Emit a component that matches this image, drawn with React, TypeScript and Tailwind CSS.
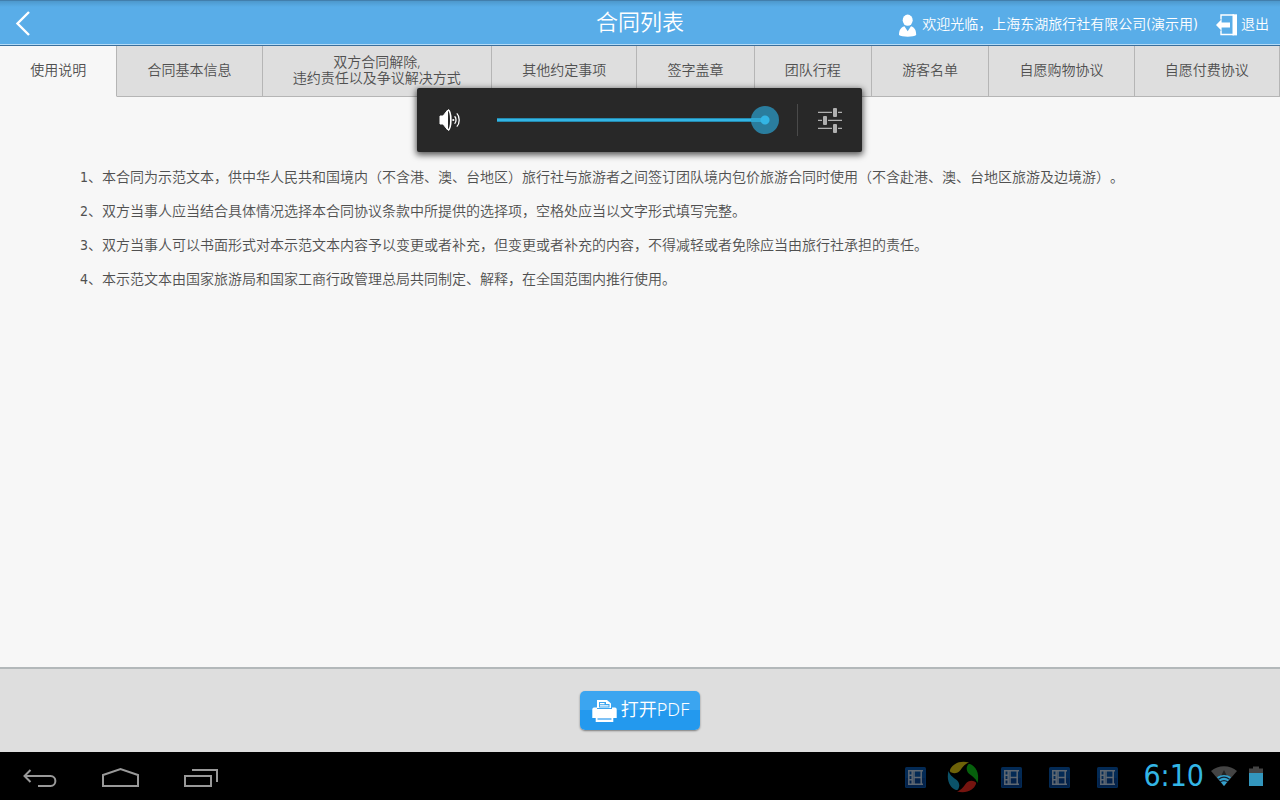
import { useState } from "react";

const tabs = [
  "使用说明",
  "合同基本信息",
  "双方合同解除,\n违约责任以及争议解决方式",
  "其他约定事项",
  "签字盖章",
  "团队行程",
  "游客名单",
  "自愿购物协议",
  "自愿付费协议",
];

const notes = [
  "1、本合同为示范文本，供中华人民共和国境内（不含港、澳、台地区）旅行社与旅游者之间签订团队境内包价旅游合同时使用（不含赴港、澳、台地区旅游及边境游）。",
  "2、双方当事人应当结合具体情况选择本合同协议条款中所提供的选择项，空格处应当以文字形式填写完整。",
  "3、双方当事人可以书面形式对本示范文本内容予以变更或者补充，但变更或者补充的内容，不得减轻或者免除应当由旅行社承担的责任。",
  "4、本示范文本由国家旅游局和国家工商行政管理总局共同制定、解释，在全国范围内推行使用。",
];

function Header() {
  return (
    <header className="grid h-[46px] grid-cols-[1fr_auto_1fr] items-center border-t border-b border-t-[#427fad] border-b-[#3a6f9c] bg-[linear-gradient(to_bottom,#4d98cc_0px,#59ade8_6px,#59ade8_43px,#b5dcf7_43px)] text-white">
      <button aria-label="返回" className="ml-3.5 w-fit">
        <svg width="18" height="28" viewBox="0 0 18 28" fill="none" stroke="currentColor" strokeWidth="2.4">
          <path d="M15 3 3.5 14.5 15 26" />
        </svg>
      </button>
      <h1 className="pb-1 text-[22px] leading-7 font-[350]">合同列表</h1>
      <div className="flex items-center justify-end gap-4.5 pt-0.5 pr-[11px] font-['DejaVu_Sans_Condensed','Noto_Sans_CJK_SC',sans-serif] text-sm">
        <span className="flex items-center gap-1">
          <svg width="20" height="24" viewBox="0 0 20 24" fill="currentColor" className="mt-1">
            <ellipse cx="9.7" cy="6.2" rx="5" ry="5.6" />
            <path d="M1 21C1 16.5 2.4 13.4 6.4 12.2L9.7 17.2L13 12.2C17 13.4 18.2 16.5 18.2 21C16 23.2 3.6 23.2 1 21Z" />
          </svg>
          欢迎光临，上海东湖旅行社有限公司(演示用)
        </span>
        <a href="#logout" className="flex items-center gap-1">
          <svg width="21" height="22" viewBox="0 0 21 22" fill="currentColor" className="mt-0.5">
            <path d="M0 11 5.6 5.2V8.5H14V13.5H5.6V16.8Z" />
            <path d="M5 5.5V1H18M5 16.5V20.5H18" fill="none" stroke="currentColor" strokeWidth="1.4" />
            <path d="M16.5 0.3H21V21.4H16.5Z" />
          </svg>
          退出
        </a>
      </div>
    </header>
  );
}

function VolumePanel() {
  const [volume, setVolume] = useState(100);
  return (
    <div className="pointer-events-none absolute inset-x-0 top-[88px] flex justify-center pr-px">
      <div className="pointer-events-auto flex h-16 w-[445px] items-center rounded-xs bg-[#282828] pl-5 shadow-[0_2px_6px_1px_rgba(0,0,0,0.65)]">
        <svg width="26" height="26" viewBox="0 0 26 26" fill="none" stroke="#fff" className="shrink-0">
          <path d="M3 9H6L10.5 3.2V22.8L6 17H3Z" fill="#fff" strokeLinejoin="round" />
          <path d="M11 2.8C14.8 4.5 14.8 21.5 11 23.2" strokeWidth="1.6" />
          <circle cx="16.3" cy="13" r="1.1" fill="#fff" stroke="none" />
          <path d="M17.6 9.2C19.5 11 19.5 15 17.6 16.8M19.8 6.4C23 9.5 23 16.5 19.8 19.6" strokeWidth="1.3" />
        </svg>
        <input
          type="range"
          aria-label="音量"
          min={0}
          max={100}
          value={volume}
          onChange={(e) => setVolume(Number(e.target.value))}
          className="mr-[18px] ml-5 h-8 min-w-0 flex-1 appearance-none bg-[linear-gradient(#258bb0_0_1px,#33b5e5_1px_3px,#258bb0_3px)] bg-[length:calc(100%-28px)_4px] bg-center bg-no-repeat [&::-webkit-slider-thumb]:size-7 [&::-webkit-slider-thumb]:appearance-none [&::-webkit-slider-thumb]:rounded-full [&::-webkit-slider-thumb]:bg-[radial-gradient(circle,#33b5e5_4px,transparent_5px),linear-gradient(to_right,#2fa5d0_50%,transparent_50%),linear-gradient(#2a7d9e,#2a7d9e)] [&::-webkit-slider-thumb]:bg-[length:100%_100%,100%_4px,100%_100%] [&::-webkit-slider-thumb]:bg-center [&::-webkit-slider-thumb]:bg-no-repeat"
        />
        <span className="h-8 w-px bg-[#4a4a4a]" />
        <button aria-label="音量设置" className="flex w-16 shrink-0 justify-center">
          <svg width="26" height="26" viewBox="0 0 26 26" fill="#b0b0b0">
            <path d="M1 4.7H15V6H1ZM21 4.7H25V6H21ZM1 12.7H5V14H1ZM11 12.7H25V14H11ZM1 20.7H15V22H1ZM21 20.7H25V22H21Z" />
            <rect x="16" y="1" width="4" height="9" rx="1" />
            <rect x="6" y="9" width="4" height="9" rx="1" />
            <rect x="16" y="17" width="4" height="9" rx="1" />
          </svg>
        </button>
      </div>
    </div>
  );
}

function FilmIcon() {
  return (
    <svg width="21" height="21" viewBox="0 0 21 21">
      <rect width="21" height="21" rx="1.5" fill="#032a55" />
      <rect x="1" y="11" width="19" height="9" fill="#04224a" />
      <path
        d="M3.8 3V18M7.2 3V18M3 3.8H18M3 17.2H18M3.8 8.3H7.2M3.8 12.8H7.2M9 10.5H16M9 3.8V17.2M16.2 3.8V17.2"
        fill="none"
        stroke="#5f6872"
        strokeWidth="1.5"
      />
    </svg>
  );
}

function PinwheelIcon() {
  const blade = "M3 9C5 3.5 12-1 22 1.5C18 3 16.5 5 13.5 9C11 12.5 7 13 4.5 11.5C3 10.8 2.7 10 3 9Z";
  return (
    <svg width="33" height="32" viewBox="0 0 33 32">
      <path d={blade} fill="#6e6208" />
      <path d={blade} fill="#06600c" transform="rotate(90 16 16)" />
      <path d={blade} fill="#75140f" transform="rotate(180 16 16)" />
      <path d={blade} fill="#0b5269" transform="rotate(270 16 16)" />
    </svg>
  );
}

function SystemBar() {
  return (
    <nav className="flex h-12 items-center justify-between bg-black pt-0.5 pr-[17px] pl-[21px]">
      <div className="flex items-center gap-11 text-[#999]">
        <button aria-label="后退">
          <svg width="36" height="24" viewBox="0 0 36 24" fill="none" stroke="currentColor" strokeWidth="2">
            <path d="M9.5 5 3.5 11 9.5 17M3.5 11H29.5C36 11 36 21 29.5 21H17" />
          </svg>
        </button>
        <button aria-label="主页">
          <svg width="38" height="24" viewBox="0 0 38 24" fill="none" stroke="currentColor" strokeWidth="2">
            <path d="M2 21V10L19.500 4 37 10V21Z" />
          </svg>
        </button>
        <button aria-label="最近任务">
          <svg width="36" height="24" viewBox="0 0 36 24" fill="none" stroke="currentColor" strokeWidth="2">
            <path d="M2 11H28V21H2ZM9 5H34V17" />
          </svg>
        </button>
      </div>
      <div className="flex items-center">
        <div className="mr-[25px] flex items-center gap-[27px]">
          <FilmIcon />
          <span className="-mx-1.5">
            <PinwheelIcon />
          </span>
          <FilmIcon />
          <FilmIcon />
          <FilmIcon />
        </div>
        <time className="pb-0.5 font-['DejaVu_Sans_Condensed','Noto_Sans',sans-serif] text-3xl leading-8 text-[#33b5e5]">6:10</time>
        <svg width="28" height="24" viewBox="0 0 28 24" className="ml-1.5">
          <path d="M1 6C8-.5 20-.5 27 6L14 21Z" fill="#444" />
          <path d="M14 5 17 11H11Z" fill="#222" />
          <path d="M7 12.2C11 9.300 17 9.300 21 12.2L14 21Z" fill="#33a0cc" />
          <path d="M8.500 14.2C12 11.6 16 11.6 19.500 14.2M10 17C12.8 15 15.2 15 18 17" fill="none" stroke="#123" strokeWidth="1.2" />
        </svg>
        <svg width="14" height="22" viewBox="0 0 14 22" className="ml-[11px]">
          <path d="M0 2.500H4V0.500H10V2.500H14V8H0Z" fill="#444" />
          <path d="M0 7H14V20H0Z" fill="#3396bd" />
        </svg>
      </div>
    </nav>
  );
}

export default function App() {
  const [active, setActive] = useState(0);
  return (
    <div lang="zh-CN" className="relative flex min-h-screen flex-col bg-[#f7f7f7] font-['Noto_Sans','Noto_Sans_CJK_SC',sans-serif] font-[350] text-[#505050] [text-spacing-trim:space-all]">
      <Header />
      <div role="tablist" className="flex h-[51px]">
        {tabs.map((label, i) => (
          <button
            key={label}
            role="tab"
            aria-selected={i === active}
            onClick={() => setActive(i)}
            className={
              i === active
                ? "flex-auto border-r border-b border-r-[#b5b5b5] border-b-[#f7f7f7] px-[30px] pb-0.5 text-sm leading-4 whitespace-pre"
                : "flex-auto border-r border-b border-[#b5b5b5] bg-[#dedede] px-[30px] pb-0.5 text-sm leading-4 whitespace-pre"
            }
          >
            {label}
          </button>
        ))}
      </div>
      <main className="flex-1 px-20 pt-[63px] font-['DejaVu_Sans_Condensed','Noto_Sans_CJK_SC',sans-serif]">
        {notes.map((note) => (
          <p key={note} className="text-sm leading-[34px]">
            {note}
          </p>
        ))}
      </main>
      <footer className="flex h-[85px] justify-center border-t-2 border-[#b3b8ba] bg-[#dedede] pt-[22px]">
        <button className="flex h-[39px] items-center gap-1 rounded-[5px] bg-[linear-gradient(to_bottom,#3ba5f0_0_19px,#2399ee_19px)] pr-[11px] pl-3 text-lg text-white shadow-[0_1px_2px_rgba(0,0,0,0.45)]">
          <svg width="25" height="24" viewBox="0 0 25 24" fill="#fff">
            <path d="M5 1H15L19 4.5V9H5Z" />
            <path d="M7 3H14V5H17.5V8.5H7Z" fill="#3ba5f0" />
            <path d="M8 4H12.5V5.2H8ZM8 6.3H16.5V7.6H8Z" />
            <path d="M2 8.5H5V10H20V8.5H23A1.8 1.8 0 0 1 24.7 10.2V19H21.3V23H3.7V19H.3V10.2A1.8 1.8 0 0 1 2 8.5Z" />
            <path d="M5.5 19H19.5V21H5.5Z" fill="#80c2f5" />
          </svg>
          <span className="pb-1 leading-7">打开PDF</span>
        </button>
      </footer>
      <SystemBar />
      <VolumePanel />
    </div>
  );
}
